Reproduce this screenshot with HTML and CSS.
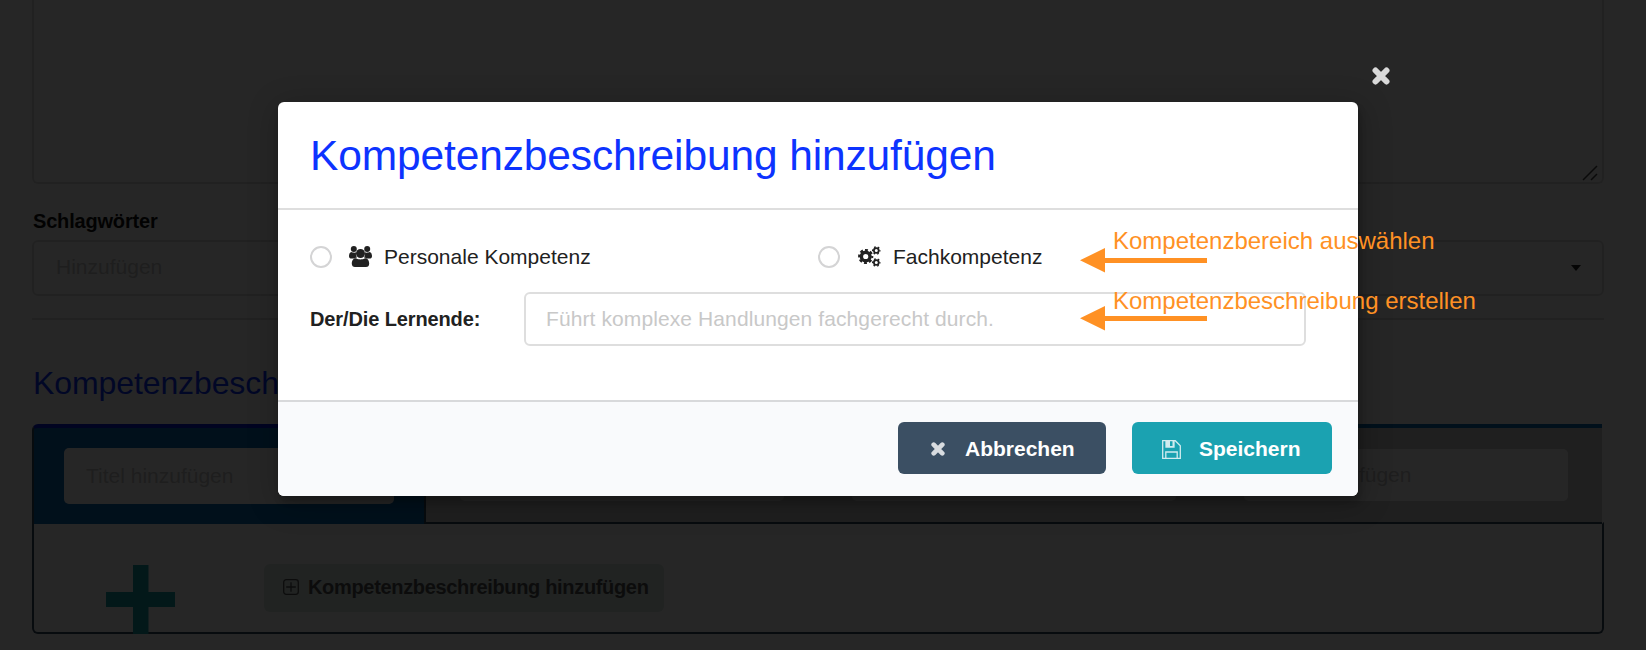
FILE: index.html
```html
<!DOCTYPE html>
<html lang="de">
<head>
<meta charset="utf-8">
<title>Kompetenzbeschreibung hinzufügen</title>
<link rel="stylesheet" href="styles.css">
</head>
<body>
<main class="page">
  <div class="textarea">
    <svg class="grip" width="16" height="16" viewBox="0 0 16 16"><path d="M1 15 15 1M9 15l6-6"/></svg>
  </div>
  <div class="label"><span class="t-label">Schlagwörter</span></div>
  <div class="dropdown"><span class="t-add">Hinzufügen</span><i class="caret"></i></div>
  <div class="rule"></div>
  <h2 class="heading">Kompetenzbeschreibungen</h2>
  <div class="tabs">
    <div class="tab active"><div class="tab-input"><span class="t-tab">Titel hinzufügen</span></div></div>
    <div class="tab"><div class="tab-input"><span class="t-tab">Titel hinzufügen</span></div></div>
    <div class="tab"><div class="tab-input"><span class="t-tab">Titel hinzufügen</span></div></div>
    <div class="tab"><div class="tab-input"><span class="t-tab">Titel hinzufügen</span></div></div>
  </div>
  <section class="segment">
    <svg class="plus" width="69" height="69" viewBox="0 0 69 69"><path d="M27 0h15.500v27H69v15H42.500v27H27V42H0V27h27z"/></svg>
    <div class="add-button">
      <svg width="16" height="16" viewBox="0 0 16 16"><rect x=".7" y=".7" width="14.600" height="14.600" rx="2.500"/><path d="M8 3.200v9.600M3.200 8h9.600"/></svg>
      <span class="t-button">Kompetenzbeschreibung hinzufügen</span>
    </div>
  </section>
</main>

<div class="dimmer">
  <div class="modal">
    <svg class="close" width="18" height="18" viewBox="0 0 18 18"><path d="M3.500 3.500 14.500 14.500M14.500 3.500 3.500 14.500"/></svg>
    <header class="modal-header"><h1 class="title">Kompetenzbeschreibung hinzufügen</h1></header>
    <div class="modal-body">
      <div class="choices">
        <div class="choice">
          <i class="radio"></i>
          <svg class="icon" width="23" height="21" viewBox="0 0 23 21">
            <circle cx="4.800" cy="3" r="3"/><circle cx="18.200" cy="3" r="3"/>
            <path d="M2.500 6c1 .7 3.500.9 4.700.3C6.600 8.200 7 10 8 11.500c-1 .1-1.800.4-2.500 1H2.500C1 12.500 0 11.600 0 10.200 0 8.400.7 6 2.500 6z"/>
            <path d="M20.500 6c-1 .7-3.500.9-4.700.3.600 1.900.2 3.700-.8 5.200 1 .1 1.800.4 2.500 1h3c1.500 0 2.500-.9 2.500-2.300 0-1.800-.7-4.200-2.500-4.200z"/>
            <circle cx="11.500" cy="7.500" r="4.500"/>
            <path d="M7 12.200c2.500 1.600 6.500 1.600 9 0 3 0 4.200 2.500 4.200 5.500 0 2-1.200 3.300-3.200 3.300H6c-2 0-3.200-1.300-3.200-3.300 0-3 1.200-5.500 4.200-5.500z"/>
          </svg>
          <span class="t-personal">Personale Kompetenz</span>
        </div>
        <div class="choice">
          <i class="radio"></i>
          <svg class="icon gears" width="23" height="21" viewBox="0 0 23 21">
            <circle cx="7.700" cy="10.500" r="4.300" stroke-width="3.400"/>
            <circle cx="7.700" cy="10.500" r="6.400" stroke-width="2.400" stroke-dasharray="2.900 2.127" stroke-dashoffset="1.450"/>
            <circle cx="18.300" cy="4.500" r="2.400" stroke-width="1.800"/>
            <circle cx="18.300" cy="4.500" r="3.600" stroke-width="1.400" stroke-dasharray="1.700 2.070" stroke-dashoffset=".85"/>
            <circle cx="18.300" cy="16.500" r="2.400" stroke-width="1.800"/>
            <circle cx="18.300" cy="16.500" r="3.600" stroke-width="1.400" stroke-dasharray="1.700 2.070" stroke-dashoffset=".85"/>
          </svg>
          <span class="t-subject">Fachkompetenz</span>
        </div>
      </div>
      <div class="field">
        <div class="field-label"><span class="t-learner">Der/Die Lernende:</span></div>
        <div class="field-input"><span class="t-placeholder">Führt komplexe Handlungen fachgerecht durch.</span></div>
      </div>
    </div>
    <footer class="modal-footer">
      <div class="button cancel">
        <svg width="14" height="14" viewBox="0 0 14 14"><path d="M2.700 2.700 11.300 11.300M11.300 2.700 2.700 11.300"/></svg>
        <span class="t-cancel">Abbrechen</span>
      </div>
      <div class="button save">
        <svg width="19" height="19" viewBox="0 0 19 19"><path d="M.7.7h12.600l5 5v12.600H.7z"/><path d="M3.800 18v-6h11.400v6M4 1v6h8V1"/><path class="fill" d="M4 1h4v6H4zM10.500 1h1.500v6H4V6h6.500z"/></svg>
        <span class="t-save">Speichern</span>
      </div>
    </footer>
  </div>
</div>

<div class="note note-area">
  <span class="t-note1">Kompetenzbereich auswählen</span>
  <svg class="arrow" width="127" height="25" viewBox="0 0 127 25"><path d="M0 12.300 25 0v10h102v5H25v9.500z"/></svg>
</div>
<div class="note note-text">
  <span class="t-note2">Kompetenzbeschreibung erstellen</span>
  <svg class="arrow" width="127" height="25" viewBox="0 0 127 25"><path d="M0 12.300 25 0v10h102v5H25v9.500z"/></svg>
</div>
</body>
</html>
```
FILE: styles.css
```css
* { box-sizing: border-box; }
body {
  margin: 0;
  height: 650px;
  overflow: hidden;
  position: relative;
  background: #fff;
  color: #212121;
  font: 20px/24px "Liberation Sans", Arial, sans-serif;
}
span, h1, h2 { white-space: nowrap; }
svg { display: block; flex: none; fill: none; }

/* Form behind the dialog */
.page { padding: 0 42px 0 32px; }
.textarea {
  height: 184px;
  width: 1572px;
  border: 2px solid #dedede;
  border-top: 0;
  border-radius: 0 0 6px 6px;
  display: flex;
  justify-content: flex-end;
  align-items: flex-end;
  padding: 0 4px 1px 0;
}
.grip { stroke: #444; stroke-width: 1.500; }
.label { height: 56px; padding: 25px 0 0 1px; font-weight: bold; color: #111; letter-spacing: -.18px; }
.dropdown {
  width: 1572px;
  height: 56px;
  border: 2px solid #dedede;
  border-radius: 6px;
  padding: 0 21px 2px 22px;
  display: flex;
  align-items: center;
  justify-content: space-between;
  color: #c8c8c8;
  font-size: 21px;
}
.caret { border: 5.500px solid transparent; border-top: 6px solid #222; border-bottom: 0; margin-top: 2px; }
.rule { width: 1572px; height: 2px; margin-top: 22px; background: #dedede; }
.heading { margin: 0; height: 104px; padding: 43px 0 0 1px; font-size: 32px; line-height: 40px; font-weight: normal; color: #0d33ff; letter-spacing: -.1px; }
.tabs { width: 1570px; height: 100px; display: grid; grid-template-columns: 394px 1fr 1fr 1fr; }
.tab { background: #d2d2d2; border-top: 4px solid #0b6bb4; border-bottom: 2px solid #34495e; padding: 21px 34px 0; }
.tab-input { height: 52px; background: #fff; border-radius: 5px; padding: 0 20px 1px; display: flex; align-items: center; color: #c8c8c8; font-size: 21px; }
.tab.active { background: #0b6bb4; border-top-color: #0d20dd; border-bottom: 0; border-right: 2px solid #34495e; border-left: 2px solid #34495e; border-radius: 6px 0 0 0; padding: 20px 30px 0; }
.active .tab-input { height: 56px; padding: 0 22px; }
.segment {
  width: 1572px;
  height: 112px;
  margin-top: -2px;
  border: 2px solid #34495e;
  border-top-color: transparent;
  border-radius: 0 0 6px 6px;
  padding: 40px 0 0 72px;
  display: flex;
  align-items: flex-start;
  gap: 89px;
}
.plus { fill: #17a2a8; margin-top: 1px; }
.add-button { width: 400px; height: 48px; background: #dae8e4; border-radius: 6px; padding: 0 0 2px 19px; display: flex; align-items: center; gap: 9px; font-weight: bold; color: #555; letter-spacing: -.33px; }
.add-button svg { stroke: #555; stroke-width: 1.300; }

/* Dialog */
.dimmer { position: absolute; inset: 0; background: rgba(0, 0, 0, .85); padding: 102px 0 0 278px; }
.modal {
  position: relative;
  width: 1080px;
  height: 394px;
  border-radius: 6px;
  background: #fff;
  box-shadow: 2px 6px 6px rgba(0, 0, 0, .2), 2px 6px 30px 4px rgba(0, 0, 0, .2);
}
.close { position: absolute; top: -35px; right: -32px; stroke: #d9d9d9; stroke-width: 6; stroke-linecap: round; }
.modal-header { height: 108px; padding: 30px 32px 0; border-bottom: 2px solid #dedede; }
.title { margin: 0; font-size: 42.500px; line-height: 48px; font-weight: normal; color: #0d33ff; letter-spacing: -.13px; }
.modal-body { height: 190px; padding: 32px 52px 0 32px; font-size: 21px; }
.choices { display: grid; grid-template-columns: 508px 1fr; height: 50px; }
.choice { display: flex; align-items: center; height: 30px; }
.radio { width: 22px; height: 22px; border: 2px solid #d4d4d5; border-radius: 50%; margin-right: 17px; }
.icon { fill: #212121; margin: 0 12px 1px 0; }
.gears { fill: none; stroke: #212121; margin: 0 12px 1px 1px; }
.field { display: flex; height: 54px; }
.field-label { width: 214px; display: flex; align-items: center; font-weight: bold; font-size: 20px; letter-spacing: -.12px; }
.field-input { flex: 1; border: 2px solid #dedede; border-radius: 6px; padding-left: 20px; display: flex; align-items: center; color: #c8c8c8; letter-spacing: .1px; }
.modal-footer {
  height: 96px;
  border-top: 2px solid #d8d9db;
  background: #f9fafc;
  border-radius: 0 0 6px 6px;
  padding: 20px 26px 0;
  display: flex;
  justify-content: flex-end;
  gap: 26px;
  font-size: 21px;
}
.button { height: 52px; border-radius: 6px; display: flex; align-items: center; color: #fff; font-weight: bold; padding-top: 2px; }
.cancel { width: 208px; background: #3b4f63; padding-left: 33px; gap: 20px; }
.cancel svg { stroke: #d8dce0; stroke-width: 4.700; stroke-linecap: round; }
.save { width: 200px; background: #1ba2b1; padding-left: 30px; gap: 18px; }
.save svg { stroke: #d1ecef; stroke-width: 1.300; }
.save .fill { fill: #d1ecef; stroke: none; }

/* Callouts lying over the dialog */
.note { position: absolute; left: 1080px; color: #ff9124; font-size: 24px; line-height: 28px; padding-left: 33px; }
.note-area { top: 227px; }
.note-text { top: 287px; }
.arrow { position: absolute; left: 0; top: 21px; fill: #ff9124; }
.note-text .arrow { top: 19px; }
```
